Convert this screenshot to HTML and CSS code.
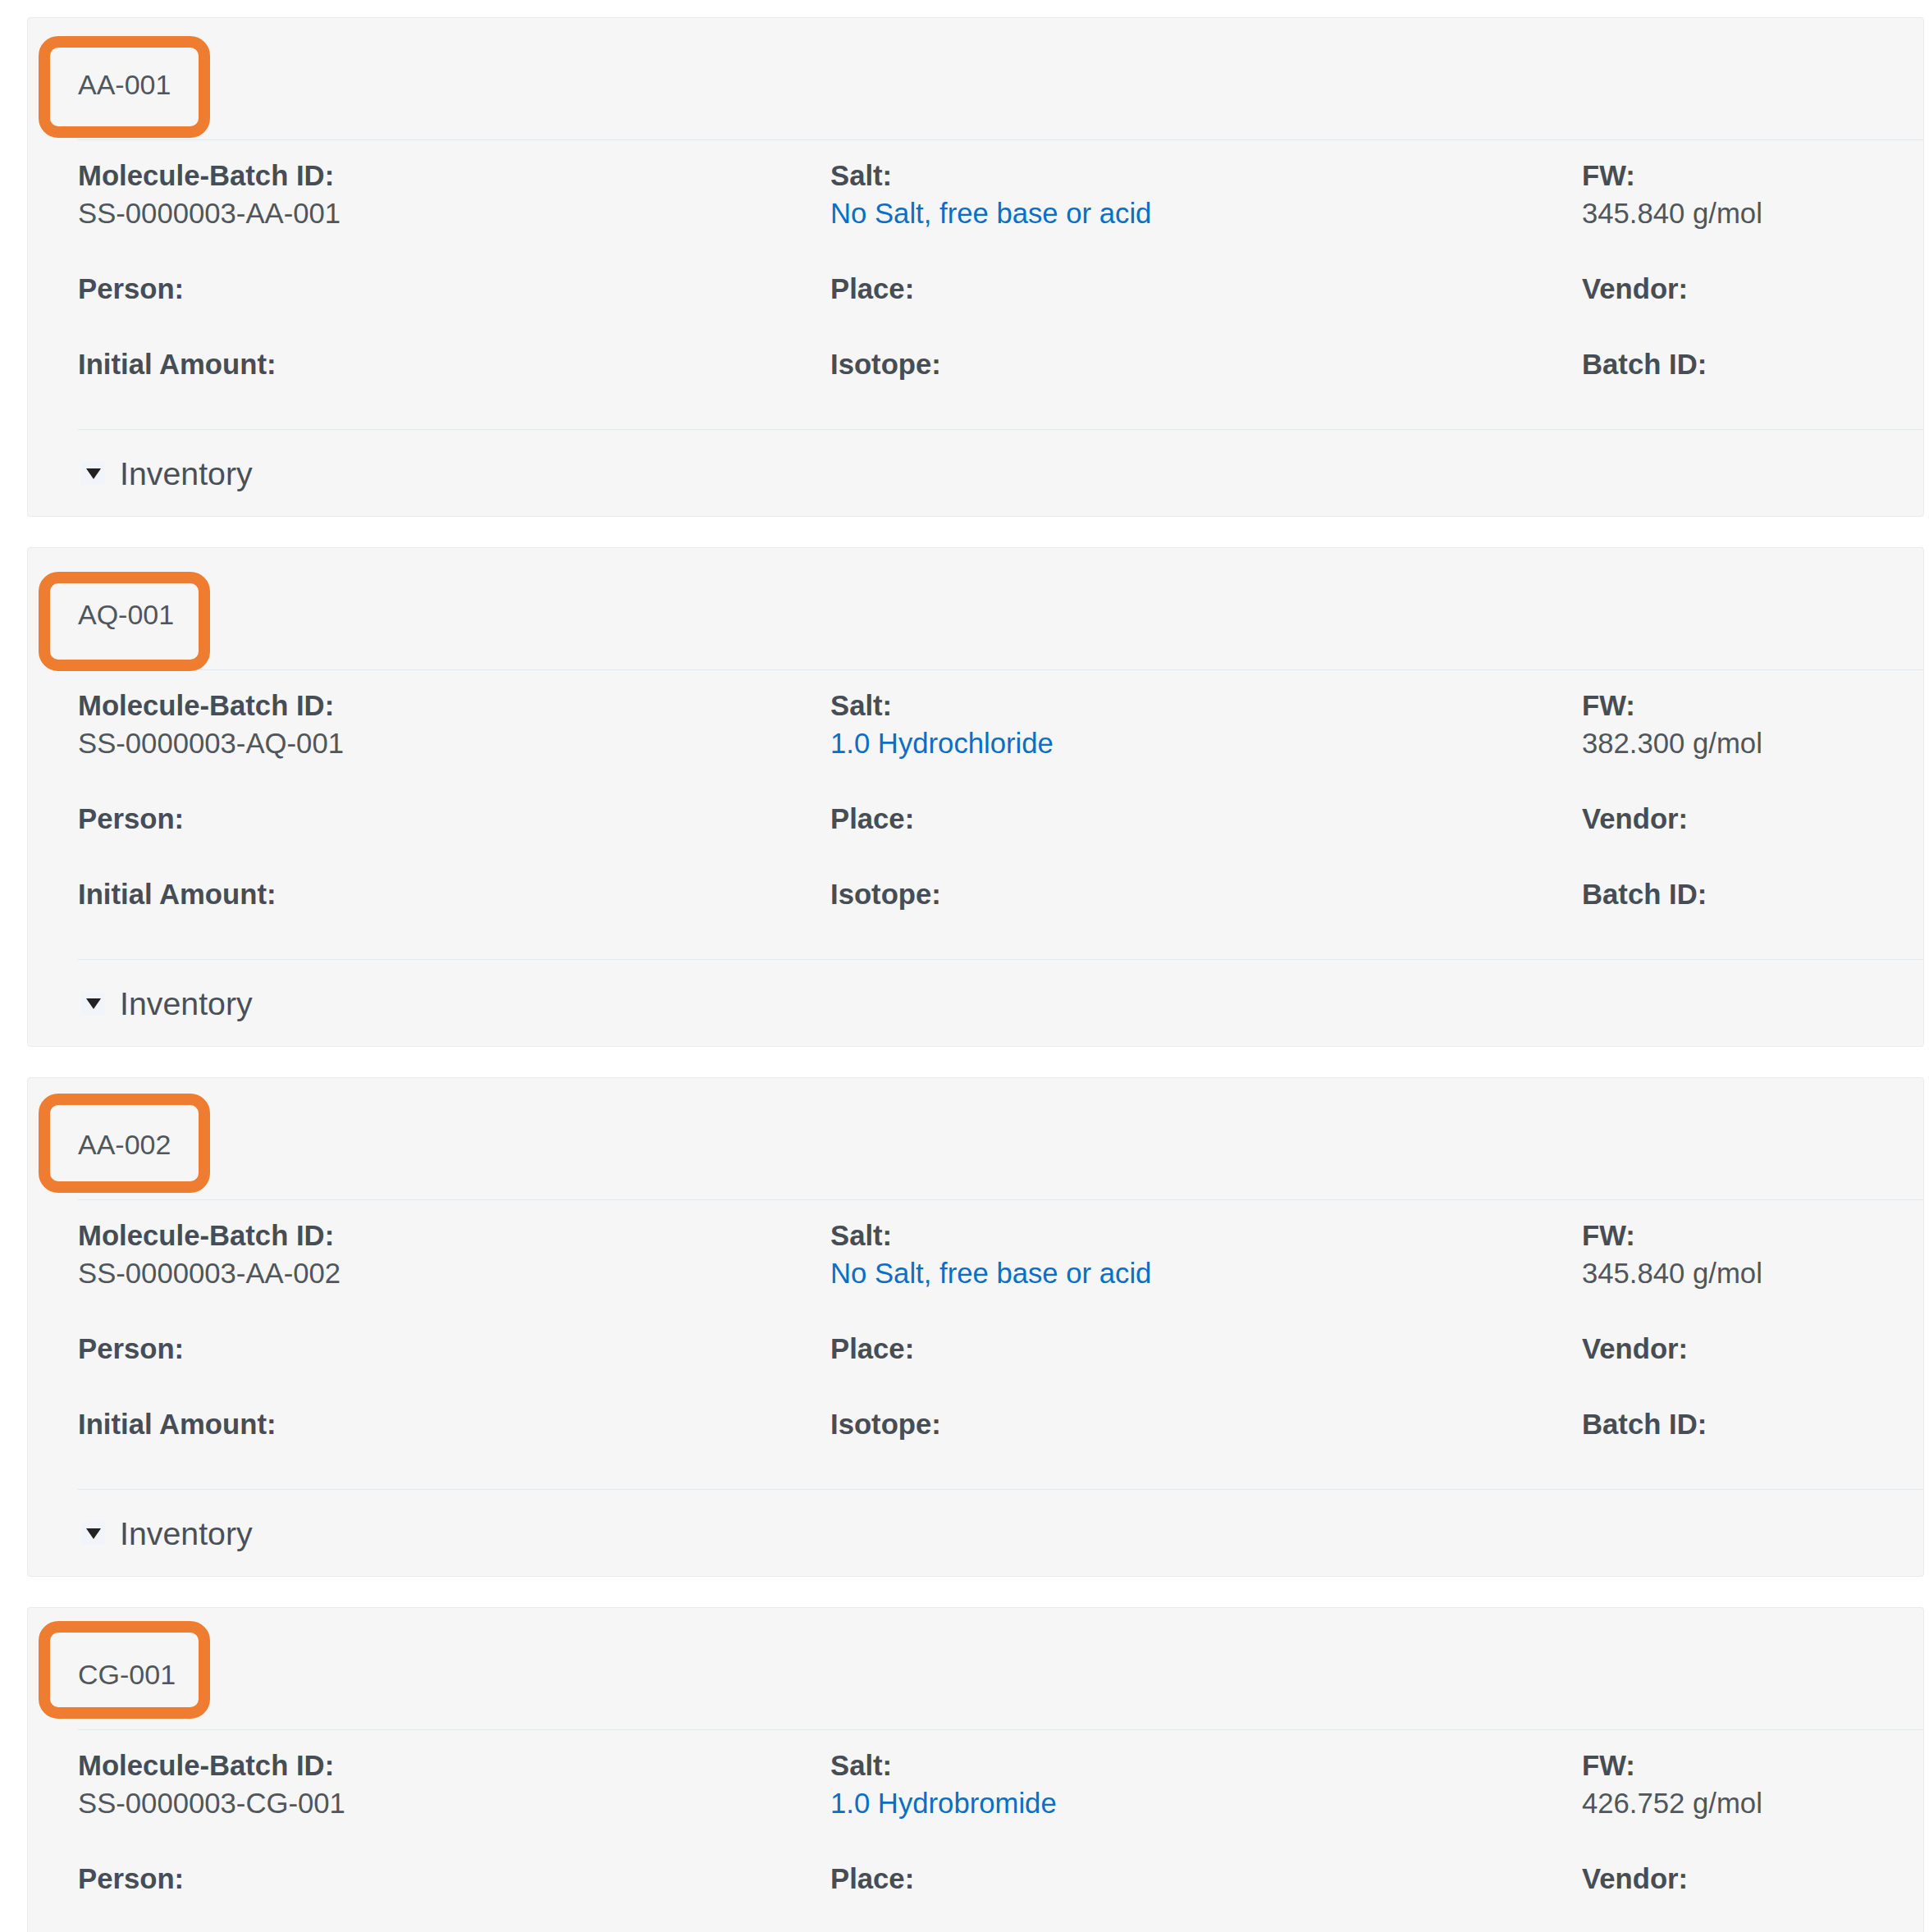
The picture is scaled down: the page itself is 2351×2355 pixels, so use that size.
FILE: index.html
```html
<!DOCTYPE html>
<html lang="en">
<head>
<meta charset="utf-8">
<title>Batches</title>
<link rel="stylesheet" href="styles.css">
</head>
<body>
<main class="list">

  <section class="card">
    <span class="mark mark-1"></span>
    <div class="inner">
      <header class="card-head">AA-001</header>
      <div class="fields">
        <div class="field"><div class="label">Molecule-Batch ID:</div><div class="val">SS-0000003-AA-001</div></div>
        <div class="field"><div class="label">Salt:</div><div class="val"><a class="link" href="#">No Salt, free base or acid</a></div></div>
        <div class="field"><div class="label">FW:</div><div class="val">345.840 g/mol</div></div>
        <div class="field"><div class="label">Person:</div><div class="val"></div></div>
        <div class="field"><div class="label">Place:</div><div class="val"></div></div>
        <div class="field"><div class="label">Vendor:</div><div class="val"></div></div>
        <div class="field"><div class="label">Initial Amount:</div><div class="val"></div></div>
        <div class="field"><div class="label">Isotope:</div><div class="val"></div></div>
        <div class="field"><div class="label">Batch ID:</div><div class="val"></div></div>
      </div>
      <div class="inventory">
        <span class="caret"><svg width="20" height="15" viewBox="0 0 20 15"><polygon points="1,1 19,1 10,14" fill="#222"/></svg></span>
        <span class="inv-text">Inventory</span>
      </div>
    </div>
  </section>

  <section class="card">
    <span class="mark mark-2"></span>
    <div class="inner">
      <header class="card-head">AQ-001</header>
      <div class="fields">
        <div class="field"><div class="label">Molecule-Batch ID:</div><div class="val">SS-0000003-AQ-001</div></div>
        <div class="field"><div class="label">Salt:</div><div class="val"><a class="link" href="#">1.0 Hydrochloride</a></div></div>
        <div class="field"><div class="label">FW:</div><div class="val">382.300 g/mol</div></div>
        <div class="field"><div class="label">Person:</div><div class="val"></div></div>
        <div class="field"><div class="label">Place:</div><div class="val"></div></div>
        <div class="field"><div class="label">Vendor:</div><div class="val"></div></div>
        <div class="field"><div class="label">Initial Amount:</div><div class="val"></div></div>
        <div class="field"><div class="label">Isotope:</div><div class="val"></div></div>
        <div class="field"><div class="label">Batch ID:</div><div class="val"></div></div>
      </div>
      <div class="inventory">
        <span class="caret"><svg width="20" height="15" viewBox="0 0 20 15"><polygon points="1,1 19,1 10,14" fill="#222"/></svg></span>
        <span class="inv-text">Inventory</span>
      </div>
    </div>
  </section>

  <section class="card">
    <span class="mark mark-3"></span>
    <div class="inner">
      <header class="card-head">AA-002</header>
      <div class="fields">
        <div class="field"><div class="label">Molecule-Batch ID:</div><div class="val">SS-0000003-AA-002</div></div>
        <div class="field"><div class="label">Salt:</div><div class="val"><a class="link" href="#">No Salt, free base or acid</a></div></div>
        <div class="field"><div class="label">FW:</div><div class="val">345.840 g/mol</div></div>
        <div class="field"><div class="label">Person:</div><div class="val"></div></div>
        <div class="field"><div class="label">Place:</div><div class="val"></div></div>
        <div class="field"><div class="label">Vendor:</div><div class="val"></div></div>
        <div class="field"><div class="label">Initial Amount:</div><div class="val"></div></div>
        <div class="field"><div class="label">Isotope:</div><div class="val"></div></div>
        <div class="field"><div class="label">Batch ID:</div><div class="val"></div></div>
      </div>
      <div class="inventory">
        <span class="caret"><svg width="20" height="15" viewBox="0 0 20 15"><polygon points="1,1 19,1 10,14" fill="#222"/></svg></span>
        <span class="inv-text">Inventory</span>
      </div>
    </div>
  </section>

  <section class="card card-cut">
    <span class="mark mark-4"></span>
    <div class="inner">
      <header class="card-head">CG-001</header>
      <div class="fields">
        <div class="field"><div class="label">Molecule-Batch ID:</div><div class="val">SS-0000003-CG-001</div></div>
        <div class="field"><div class="label">Salt:</div><div class="val"><a class="link" href="#">1.0 Hydrobromide</a></div></div>
        <div class="field"><div class="label">FW:</div><div class="val">426.752 g/mol</div></div>
        <div class="field"><div class="label">Person:</div><div class="val"></div></div>
        <div class="field"><div class="label">Place:</div><div class="val"></div></div>
        <div class="field"><div class="label">Vendor:</div><div class="val"></div></div>
      </div>
    </div>
  </section>

</main>
</body>
</html>
```
FILE: styles.css
```css
html, body {
  margin: 0;
  padding: 0;
  background: #ffffff;
}

body {
  font-family: "Liberation Sans", Arial, Helvetica, sans-serif;
  font-size: 34.7px;
  line-height: 46px;
  color: #50565c;
}

.list {
  padding: 21px 6px 0 33px;
  display: flex;
  flex-direction: column;
  gap: 37px;
}

.card {
  position: relative;
  background: #f6f6f6;
  border: 1px solid #ebebeb;
  border-radius: 4px;
  overflow: hidden;
}

.card-cut {
  border-bottom: 0;
  border-bottom-left-radius: 0;
  border-bottom-right-radius: 0;
}

.inner {
  margin-left: 61px;
}

.card-head {
  padding: 58px 0 44px 0;
  border-bottom: 1px solid #e2e8ee;
  font-size: 34px;
  color: #50565c;
}

.fields {
  display: grid;
  grid-template-columns: 917px 916px 916px;
  padding-top: 20px;
  padding-bottom: 10px;
  border-bottom: 1px solid #e2e8ee;
}

.card-cut .fields {
  border-bottom: 0;
}

.field {
  margin-bottom: 46px;
}

.label {
  font-weight: bold;
  color: #464d55;
}

.val {
  color: #50565c;
}

.link {
  color: #0a6fc6;
  text-decoration: none;
}

.inventory {
  display: flex;
  align-items: center;
  padding: 30px 0 29px 4px;
}

.caret {
  width: 29px;
  height: 28px;
  display: flex;
  align-items: center;
  justify-content: center;
  background: #f1f4f8;
  margin-right: 18px;
}

.caret svg {
  display: block;
}

.inv-text {
  font-size: 39.3px;
  color: #4a5057;
}

.mark {
  position: absolute;
  left: 13px;
  width: 209px;
  border: 14px solid #ee7d31;
  border-radius: 24px;
  box-sizing: border-box;
  pointer-events: none;
}

.mark-1 { top: 22px; height: 124px; }
.mark-2 { top: 29px; height: 121px; }
.mark-3 { top: 19px; height: 121px; }
.mark-4 { top: 16px; height: 119px; }
```
